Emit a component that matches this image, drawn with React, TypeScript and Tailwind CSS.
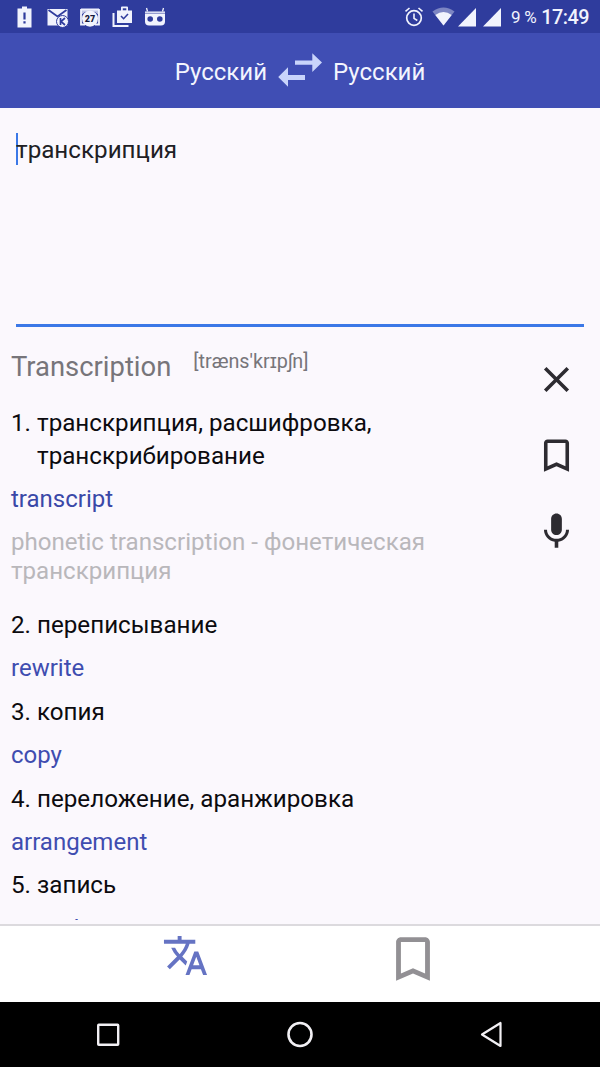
import type { ReactNode } from 'react';

const BOOKMARK =
  'M17 3H7c-1.1 0-1.99.9-1.99 2L5 21l7-3 7 3V5c0-1.1-.9-2-2-2zm0 15l-5-2.18L7 18V5h10v13z';
const CLOSE =
  'M19 6.41L17.59 5 12 10.59 6.41 5 5 6.41 10.59 12 5 17.59 6.41 19 12 13.41 17.59 19 19 17.59 13.41 12z';
const MIC =
  'M12 14c1.66 0 2.99-1.34 2.99-3L15 5c0-1.66-1.34-3-3-3S9 3.34 9 5v6c0 1.66 1.34 3 3 3zm5.3-3c0 3-2.54 5.1-5.3 5.1S6.7 14 6.7 11H5c0 3.41 2.72 6.23 6 6.72V21h2v-3.28c3.28-.48 6-3.3 6-6.72h-1.7z';
const TRANSLATE =
  'M12.87 15.07l-2.54-2.51.03-.03c1.74-1.94 2.98-4.17 3.71-6.53H17V4h-7V2H8v2H1v1.99h11.17C11.5 7.92 10.44 9.75 9 11.35 8.07 10.32 7.3 9.19 6.69 8h-2c.73 1.63 1.73 3.17 2.98 4.56l-5.09 5.02L4 19l5-5 3.11 3.11.76-2.04zM18.5 10h-2L12 22h2l1.12-3h4.75L21 22h2l-4.5-12zm-2.62 7l1.62-4.33L19.12 17h-3.24z';

function Glyph({ d, className }: { d: string; className: string }) {
  return (
    <svg viewBox="0 0 24 24" fill="currentColor" className={className}>
      <path d={d} />
    </svg>
  );
}

function StatusBar() {
  return (
    <div className="flex h-[33px] shrink-0 items-center justify-between bg-[#2f3c9d] pr-[11px] pl-4 text-[#f1f3fd]">
      <div className="flex items-center gap-[14px]">
        <svg viewBox="0 0 17 24" className="h-6 w-[17px]" fill="currentColor">
          <path d="M6 1.5h5V3.500h4.5v19h-14V3.500H6z" />
          <path d="M7.4 7.500h2.2v7H7.4zM7.4 16.300h2.2v2.200H7.4z" fill="#2f3c9d" />
        </svg>
        <svg viewBox="0 0 22 24" className="h-6 w-[22px]" fill="none">
          <path d="M0.5 4h20v16.500h-20z" fill="currentColor" />
          <path d="M1.500 5l9 6.500 9-6.500" stroke="#2f3c9d" strokeWidth="1.8" />
          <circle cx="15.500" cy="16.500" r="6" fill="currentColor" stroke="#2f3c9d" strokeWidth="1" />
          <path d="M13.500 13v7M18 13l-4 3.500 4 3.500" stroke="#2f3c9d" strokeWidth="1.700" />
        </svg>
        <div className="relative -ml-[4px] h-6 w-[22px]">
          <svg viewBox="0 0 22 24" className="h-6 w-[22px]" fill="none">
            <path d="M2 4.500h18M2 4v15.500h4M20 4v15.500h-4" stroke="currentColor" strokeWidth="1.800" />
            <path d="M2 5h18v5l-4-3H6l-4 3z" fill="currentColor" opacity=".75" />
            <circle cx="11" cy="13.700" r="8" fill="currentColor" />
          </svg>
          <span className="absolute inset-x-0 top-[8px] text-center text-[9px] leading-[13px] font-black text-[#15193c]">
            27
          </span>
        </div>
        <svg viewBox="0 0 22 24" className="-ml-[3px] h-6 w-[22px]" fill="none">
          <path d="M1.500 8v13h15" stroke="currentColor" strokeWidth="2" />
          <path d="M5 5.500h4V2.500q0-1 1-1h5q1 0 1 1v3h4v12.500H5z" fill="currentColor" />
          <path d="M10.800 3.300h3.500v2h-3.500z" fill="#2f3c9d" />
          <path d="M9 11l2.600 2.700L16 9" stroke="#2f3c9d" strokeWidth="1.600" />
        </svg>
        <svg viewBox="0 0 22 24" className="-ml-[4px] h-6 w-[22px]" fill="none">
          <path d="M3.500 6.500L2.500 3M18.500 6.500L19.500 3" stroke="currentColor" strokeWidth="1.300" />
          <path d="M1 6.500h20v10q0 4-4 4H5q-4 0-4-4z" fill="currentColor" />
          <path d="M1 8.300h20" stroke="#2f3c9d" strokeWidth=".6" />
          <circle cx="6.200" cy="14" r="2.800" fill="#2f3c9d" />
          <circle cx="15.800" cy="14" r="2.800" fill="#2f3c9d" />
        </svg>
      </div>
      <div className="flex items-center">
        <svg viewBox="0 0 20 22" className="h-[22px] w-5" fill="none" stroke="currentColor">
          <circle cx="10" cy="12" r="7.300" strokeWidth="1.700" />
          <path d="M10 7.500V12.300l3.300 2.200M1.500 5.300L5.500 2M18.500 5.300L14.500 2" strokeWidth="1.600" />
        </svg>
        <svg viewBox="0 0 23 20" className="ml-[8px] h-5 w-[23px]" fill="currentColor">
          <path d="M0.500 4.500Q11.500-3.500 22.500 4.500L11.500 18.500z" opacity=".4" />
          <path d="M3.300 8Q11.500 2 19.700 8L11.500 18.500z" />
        </svg>
        <svg viewBox="0 0 20 20" className="ml-[2px] h-5 w-5" fill="currentColor">
          <path d="M19 1v18.500H1z" />
        </svg>
        <svg viewBox="0 0 20 20" className="ml-[5px] h-5 w-5" fill="currentColor">
          <path d="M19 1v18.500H1z" />
        </svg>
        <span className="ml-[9px] text-[17px] leading-5 tracking-[-0.300px] whitespace-nowrap">9 %</span>
        <span className="ml-[5px] pt-[2px] text-[19.800px] leading-5 font-medium tracking-[-0.500px]">17:49</span>
      </div>
    </div>
  );
}

function LanguageBar() {
  return (
    <header className="flex h-[75px] shrink-0 items-center justify-center bg-[#404eb4] pt-[2px] text-[24px] text-[#f3f5fe]">
      <span>Русский</span>
      <svg viewBox="0 0 44 34" className="mx-[11px] -mt-[3px] h-[34px] w-[44px]" fill="#c9d4fb">
        <path d="M17 7.500h17.300V.2L44 9.600 34.300 19v-7.200H17zM27 27H10v6.700L.2 24 10 14.300V22h17z" />
      </svg>
      <span>Русский</span>
    </header>
  );
}

function Meaning({ n, children }: { n: number; children: ReactNode }) {
  return (
    <div className="flex text-[24.200px] leading-[33px] text-[#0c0b0f]">
      <span className="w-[26px] shrink-0">{n}.</span>
      <span>{children}</span>
    </div>
  );
}

function Synonym({ children }: { children: ReactNode }) {
  return <div className="py-[5.400px] text-[24px] leading-[43px] text-[#3f4db0]">{children}</div>;
}

export default function App() {
  return (
    <div className="flex h-[1067px] w-[600px] flex-col overflow-hidden bg-[#fbf8fd] font-['Roboto',sans-serif]">
      <StatusBar />
      <LanguageBar />

      <section className="mx-4 h-[219px] shrink-0 border-b-[3px] border-[#3b78e7] pt-[25px]">
        <div className="flex h-8 items-center text-[24.200px] text-[#202024]">
          <span className="-mr-[2px] h-8 w-[2px] shrink-0 bg-[#3b78e7]" />
          <span className="pt-[3px]">транскрипция</span>
        </div>
      </section>

      <main className="flex h-[593px] shrink-0 overflow-hidden pl-[11px]">
        <div className="w-[440px] shrink-0">
          <div className="flex pt-[22px] text-[#77757a]">
            <h1 className="pt-px text-[27.400px] leading-[34px] font-normal">Transcription</h1>
            <span className="ml-[22px] pt-px text-[19.800px] leading-[24px]">[træns'krɪpʃn]</span>
          </div>
          <div className="pt-[23px]">
            <Meaning n={1}>
              транскрипция, расшифровка,
              <br />
              транскрибирование
            </Meaning>
          </div>
          <div className="-mt-px text-[24px] leading-[54px] text-[#3a48a8]">transcript</div>
          <p className="pt-[2px] pb-[24px] text-[24.100px] leading-[28.500px] text-[#b9b7bb]">
            phonetic transcription - фонетическая транскрипция
          </p>
          <Meaning n={2}>переписывание</Meaning>
          <Synonym>rewrite</Synonym>
          <Meaning n={3}>копия</Meaning>
          <Synonym>copy</Synonym>
          <Meaning n={4}>переложение, аранжировка</Meaning>
          <Synonym>arrangement</Synonym>
          <Meaning n={5}>запись</Meaning>
          <Synonym>recording</Synonym>
        </div>
        <aside className="ml-auto flex flex-col gap-[33px] pt-[31px] pr-[22px] text-[#2d2b31]">
          <Glyph d={CLOSE} className="size-[43px]" />
          <Glyph d={BOOKMARK} className="size-[43px]" />
          <Glyph d={MIC} className="size-[43px]" />
        </aside>
      </main>
      <div className="h-[4px] shrink-0" />

      <nav className="flex h-[78px] shrink-0 border-t-2 border-[#dcdade] bg-white pl-[162px]">
        <Glyph d={TRANSLATE} className="mt-[6px] size-[47px] text-[#6573c3]" />
        <Glyph d={BOOKMARK} className="mt-[4px] ml-[175px] size-[58px] text-[#929094]" />
      </nav>

      <footer className="flex grow items-center justify-between bg-black px-24 text-[#f2f0f4]">
        <svg viewBox="0 0 24 24" className="size-6" fill="none" stroke="currentColor" strokeWidth="2.400">
          <rect x="2.200" y="1.800" width="20" height="20" rx=".6" />
        </svg>
        <svg viewBox="0 0 28 28" className="size-7" fill="none" stroke="currentColor" strokeWidth="2.600">
          <circle cx="14" cy="13.500" r="11.500" />
        </svg>
        <svg viewBox="0 0 24 28" className="h-7 w-6" fill="none" stroke="currentColor" strokeWidth="2.200" strokeLinejoin="round">
          <path d="M20.500 2v23L2 13.500z" />
        </svg>
      </footer>
    </div>
  );
}
